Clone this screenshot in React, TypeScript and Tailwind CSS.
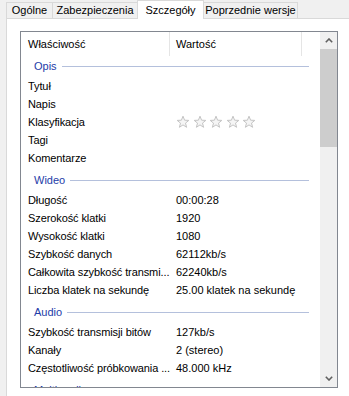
import React from 'react';

interface Row {
  name: string;
  value?: string;
  stars?: boolean;
}

interface Section {
  title: string;
  rows: Row[];
}

const sections: Section[] = [
  {
    title: 'Opis',
    rows: [
      { name: 'Tytuł' },
      { name: 'Napis' },
      { name: 'Klasyfikacja', stars: true },
      { name: 'Tagi' },
      { name: 'Komentarze' },
    ],
  },
  {
    title: 'Wideo',
    rows: [
      { name: 'Długość', value: '00:00:28' },
      { name: 'Szerokość klatki', value: '1920' },
      { name: 'Wysokość klatki', value: '1080' },
      { name: 'Szybkość danych', value: '62112kb/s' },
      { name: 'Całkowita szybkość transmi...', value: '62240kb/s' },
      { name: 'Liczba klatek na sekundę', value: '25.00 klatek na sekundę' },
    ],
  },
  {
    title: 'Audio',
    rows: [
      { name: 'Szybkość transmisji bitów', value: '127kb/s' },
      { name: 'Kanały', value: '2 (stereo)' },
      { name: 'Częstotliwość próbkowania ...', value: '48.000 kHz' },
    ],
  },
  { title: 'Multimedia', rows: [] },
];

const Star = () => (
  <svg width="14" height="14" viewBox="0 0 14 14" className="mr-[2.5px]">
    <path
      d="M7 1.2 L8.6 5.2 L12.8 5.4 L9.5 8.1 L10.6 12.3 L7 9.9 L3.4 12.3 L4.5 8.1 L1.2 5.4 L5.4 5.2 Z"
      fill="#f5f5f5"
      stroke="#c4c4c4"
      strokeWidth="1"
      strokeLinejoin="round"
    />
  </svg>
);

const Chevron = ({ up }: { up?: boolean }) => (
  <svg width="8" height="5" viewBox="0 0 8 5">
    <path
      d={up ? 'M0.8 4.2 L4 1 L7.2 4.2' : 'M0.8 0.8 L4 4 L7.2 0.8'}
      fill="none"
      stroke="#606060"
      strokeWidth="1.6"
    />
  </svg>
);

const App = () => {
  return (
    <div className="w-[349px] h-[396px] overflow-hidden bg-[#f0f0f0] text-[11px] text-black font-['Liberation_Sans',Arial,sans-serif]">
      {/* tabs */}
      <div className="flex h-[18px] items-end pl-[6px]">
        <div className="flex h-[16px] w-[46px] items-center justify-center border-l border-t border-[#d9d9d9] bg-[#f0f0f0]">
          Ogólne
        </div>
        <div className="flex h-[16px] w-[85px] items-center justify-center border-l border-t border-[#d9d9d9] bg-[#f0f0f0]">
          Zabezpieczenia
        </div>
        <div className="relative z-10 -mb-px flex h-[19px] w-[67px] items-start justify-center border-l border-r border-t border-[#d9d9d9] bg-white pt-[1px]">
          Szczegóły
        </div>
        <div className="flex h-[16px] w-[94px] items-center justify-center border-r border-t border-[#d9d9d9] bg-[#f0f0f0]">
          Poprzednie wersje
        </div>
      </div>

      {/* panel */}
      <div className="ml-[6px] h-[378px] border-l border-t border-[#d9d9d9] bg-white pl-[13px] pt-[12px]">
        <div className="flex h-[357px] w-[318px] overflow-hidden border border-[#828790] bg-white">
          <div className="flex-1 overflow-hidden">
            <div className="flex h-[24px] items-center">
              <div className="flex h-full w-[149px] items-center border-r border-[#e5e5e5] pl-[7px]">Właściwość</div>
              <div className="flex h-full w-[132px] items-center border-r border-[#e5e5e5] pl-[6px]">Wartość</div>
            </div>

            {sections.map((section, i) => (
              <div key={section.title}>
                <div className={`flex h-[21px] items-center pl-[13px] pr-[11px] ${i === 0 ? '' : 'mt-[3px]'}`}>
                  <span className="text-[#1e3ca8]">{section.title}</span>
                  <div className="ml-[5px] h-px flex-1 bg-[#b4c0dc]" />
                </div>
                {section.rows.map((row) => (
                  <div key={row.name} className="flex h-[18px] items-center">
                    <div className="w-[149px] shrink-0 whitespace-nowrap pl-[7px] tracking-[-0.1px]">{row.name}</div>
                    <div className="flex items-center whitespace-nowrap pl-[6px]">
                      {row.stars ? (
                        <>
                          <Star />
                          <Star />
                          <Star />
                          <Star />
                          <Star />
                        </>
                      ) : (
                        row.value
                      )}
                    </div>
                  </div>
                ))}
              </div>
            ))}
          </div>

          {/* scrollbar */}
          <div className="flex w-[17px] flex-col bg-[#f0f0f0]">
            <div className="flex h-[17px] items-center justify-center">
              <Chevron up />
            </div>
            <div className="h-[98px] bg-[#cdcdcd]" />
            <div className="flex-1" />
            <div className="flex h-[17px] items-center justify-center">
              <Chevron />
            </div>
          </div>
        </div>
      </div>
    </div>
  );
};

export default App;
